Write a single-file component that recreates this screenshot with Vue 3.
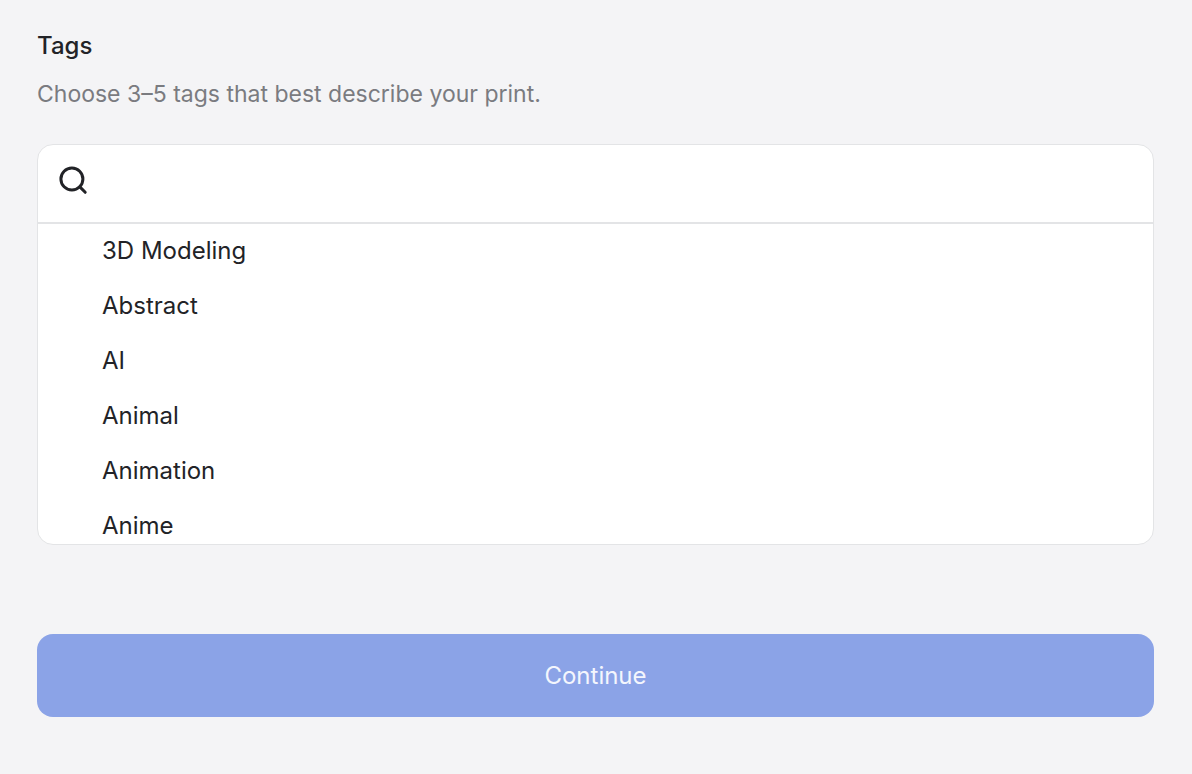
<script setup>
import { ref, computed } from 'vue'

const query = ref('')
const selected = ref([])
const tags = ['3D Modeling', 'Abstract', 'AI', 'Animal', 'Animation', 'Anime']
const visibleTags = computed(() =>
  tags.filter((t) => t.toLowerCase().includes(query.value.trim().toLowerCase()))
)
</script>

<template>
  <main class="page">
    <h1 class="title">Tags</h1>
    <p id="hint" class="hint">Choose 3–5 tags that best describe your print.</p>

    <section class="picker">
      <div class="search">
        <svg class="search-icon" viewBox="0 0 32 32" fill="none" stroke="currentColor" stroke-width="3" stroke-linecap="round" aria-hidden="true">
          <circle cx="13.9" cy="14" r="11" />
          <path d="M21.8 21.9l5.4 5.4" />
        </svg>
        <input v-model="query" class="search-input" type="text" aria-label="Search tags" aria-describedby="hint" />
      </div>
      <ul class="list">
        <li v-for="tag in visibleTags" :key="tag">
          <label class="option">
            <input v-model="selected" class="check" type="checkbox" :value="tag" />
            <span>{{ tag }}</span>
          </label>
        </li>
      </ul>
    </section>

    <button class="continue" type="button" :disabled="selected.length < 3">Continue</button>
  </main>
</template>

<style>
body {
  background: #f4f4f6;
}
</style>

<style scoped>
.page {
  box-sizing: border-box;
  padding: 28px 38px 57px 37px;
  font-family: Inter, "Liberation Sans", sans-serif;
  color: #222327;
}
.title {
  margin: 0;
  font-size: 24px;
  line-height: 36px;
  font-weight: 500;
}
.hint {
  margin: 12px 0 32px;
  font-size: 23px;
  line-height: 36px;
  color: #7a7b80;
}
.picker {
  border: 1px solid #e3e4e6;
  border-radius: 16px;
  background: #fff;
  overflow: hidden;
}
.search {
  display: flex;
  align-items: center;
  gap: 32px;
  padding: 0 20px;
  height: 77px;
  border-bottom: 2px solid #e3e4e6;
}
.search-icon {
  width: 32px;
  height: 32px;
  margin-bottom: 5px;
  flex: none;
}
.search-input {
  flex: 1;
  min-width: 0;
  height: 48px;
  padding: 0;
  border: 0;
  outline: 0;
  background: transparent;
  font: inherit;
  font-size: 24px;
}
.list {
  margin: 0;
  padding: 0;
  list-style: none;
  height: 320px;
  overflow: hidden;
}
.option {
  display: flex;
  align-items: center;
  box-sizing: border-box;
  height: 55px;
  padding: 0 20px 2px;
  font-size: 24px;
  line-height: 36px;
  cursor: pointer;
}
.check {
  appearance: none;
  width: 24px;
  height: 24px;
  margin: 0 20px 0 0;
}
.continue {
  display: block;
  width: 100%;
  height: 83px;
  margin-top: 89px;
  border: 0;
  border-radius: 16px;
  background: #8ba3e7;
  color: #f4f6fd;
  font: inherit;
  font-size: 24px;
}
</style>
